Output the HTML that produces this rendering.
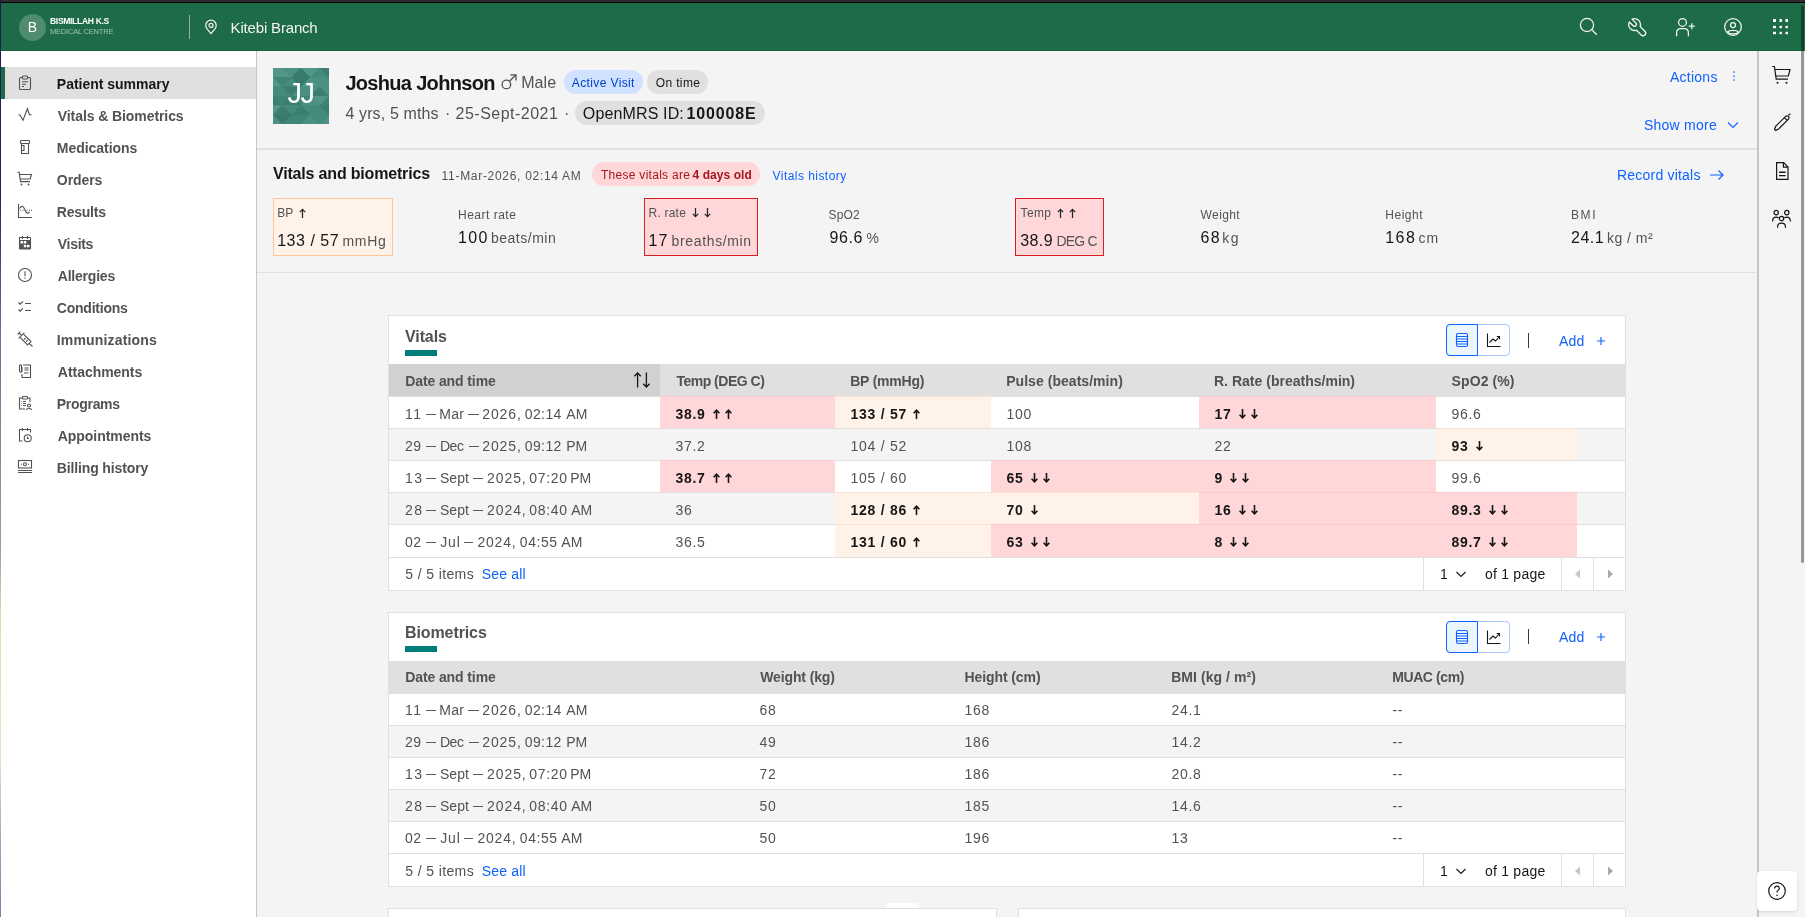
<!DOCTYPE html>
<html><head><meta charset="utf-8">
<style>
*{box-sizing:border-box;margin:0;padding:0}
html,body{width:1805px;height:917px;overflow:hidden;background:#f4f4f4;font-family:"Liberation Sans",sans-serif;color:#161616}
body{will-change:transform}
.a{position:absolute;white-space:nowrap}
#topbar{position:absolute;left:0;top:0;width:1805px;height:3px;background:#2b2b31;border-bottom:1px solid #000}
#leftline{position:absolute;left:0;top:0;width:1px;height:917px;background:linear-gradient(to bottom,#1c1b4f 0px,#23246a 200px,#6f6d98 330px,#958a9a 480px,#a99a90 550px,#e6dcb9 620px,#e9e0c4 760px,#a9acc3 830px,#7a7ea6 917px)}
#hdr{position:absolute;left:1px;top:3px;width:1804px;height:48px;background:#1e6b47;border-bottom:1px solid #1a5f3f}
#side{position:absolute;left:1px;top:51px;width:256px;height:866px;background:#fff;border-right:1px solid #c6c6c6;z-index:2}
.nav{position:absolute;left:0;width:255px;height:32px;font-size:14px;font-weight:bold;color:#525252;line-height:32px}
.nav .t{position:absolute;left:56px;top:1px}
.nav svg{position:absolute;left:16px;top:8px}
.nav.act{background:#e0e0e0;color:#161616}
.nav.act:before{content:"";position:absolute;left:0;top:0;width:4px;height:32px;background:#1e6b47}
#rside{position:absolute;left:1757px;top:51px;width:43px;height:866px;background:#f4f4f4;border-left:2px solid #c6c6c6}
#scroll{display:none}
#thumb{position:absolute;left:1801px;top:5px;width:3px;height:558px;background:rgba(0,0,0,0.38);border-radius:2px}
.lbl{font-size:12px;color:#525252}
.card{position:absolute;background:#fff;border:1px solid #e0e0e0}
.tag{position:absolute;height:24px;border-radius:12px;font-size:12px;line-height:26px;padding:0 8px;letter-spacing:0.3px}
.link{color:#0f62fe}
.lbl2{font-size:12px;color:#525252;letter-spacing:0.35px;line-height:16px}
.val{font-size:16px;color:#161616;line-height:20px;letter-spacing:0.4px}
.unit{font-size:14px;color:#525252;letter-spacing:0.4px}
.ar{display:inline-block;vertical-align:baseline;margin-right:5px;color:#161616}
.arw{margin-left:7.5px}
.ctitle{font-size:16px;font-weight:bold;color:#525252;letter-spacing:-0.1px}
.th{font-size:14px;font-weight:bold;color:#525252;line-height:34px;letter-spacing:-0.35px}
.td{font-size:14px;color:#525252;line-height:36px;letter-spacing:0.75px}
.td.b{font-weight:bold;color:#161616;letter-spacing:0.75px}
.ftxt{font-size:14px;color:#525252;line-height:16px;letter-spacing:0.15px}
.ftxt.link{color:#0f62fe}
</style></head><body>
<div id="topbar"></div>
<div id="leftline"></div>
<div id="hdr">
  <div class="a" style="left:18px;top:11px;width:27px;height:27px;border-radius:50%;background:#4f8b6e;color:#fff;font-size:14px;line-height:27px;text-align:center">B</div>
  <div class="a" style="left:49px;top:13px;font-size:8.5px;font-weight:bold;color:#fff;letter-spacing:-0.3px">BISMILLAH K.S</div>
  <div class="a" style="left:49px;top:24px;font-size:7.5px;color:#9cc3ad;letter-spacing:-0.2px">MEDICAL CENTRE</div>
  <div class="a" style="left:188px;top:12px;width:1px;height:24px;background:#8db49f"></div>
  <svg class="a" style="left:201.5px;top:16px" width="16" height="16" viewBox="0 0 16 16" fill="none" stroke="#f4f4f4" stroke-width="1.2"><path d="M8 14.6L4.1 9.8C3.3 8.8 2.8 7.6 2.8 6.4C2.8 3.5 5.1 1.2 8 1.2C10.9 1.2 13.2 3.5 13.2 6.4C13.2 7.6 12.7 8.8 11.9 9.8Z"/><circle cx="8" cy="6.4" r="2"/></svg>
  <div class="a" style="left:229.6px;top:16px;font-size:15px;color:#f4f4f4;letter-spacing:-0.175px">Kitebi Branch</div>
  <svg class="a" style="left:1559px;top:0px" width="240" height="48" viewBox="1560 3 240 48" fill="none" stroke="#f4f4f4" stroke-width="1.25">
    <circle cx="1587" cy="25" r="6.6"/><path d="M1591.8 29.8L1596.8 34.8"/>
    <g transform="translate(1626.7 16.7) scale(0.655)" fill="#f4f4f4" stroke="none"><path d="M12.1 2a9.8 9.8 0 0 0-5.4 1.6l6.4 6.4a2.1 2.1 0 0 1 .2 3a2.1 2.1 0 0 1-3-.2L3.7 6.4A9.84 9.84 0 0 0 2 12.1a10.14 10.14 0 0 0 10.1 10.1a10.9 10.9 0 0 0 2.6-.3l6.7 6.7a5 5 0 0 0 7.1-7.1l-6.7-6.7a10.9 10.9 0 0 0 .3-2.6A10 10 0 0 0 12.1 2Zm8 10.1a7.61 7.61 0 0 1-.3 2.1l-.3 1.1.8.8 6.7 6.7a2.88 2.88 0 0 1 .9 2.1A2.72 2.72 0 0 1 27 27a2.9 2.9 0 0 1-4.2 0l-6.7-6.7-.8-.8-1.1.3a7.61 7.61 0 0 1-2.1.3a8.27 8.27 0 0 1-5.7-2.3A7.630 7.63 0 0 1 4 12.1a8.330 8.33 0 0 1 .3-2.2l4.4 4.4a4.14 4.14 0 0 0 5.9.2a4.14 4.14 0 0 0-.2-5.9L10 4.2a6.45 6.45 0 0 1 2-.3a8.27 8.27 0 0 1 5.7 2.3a8.57 8.57 0 0 1 2.4 5.9Z"/></g>
    <circle cx="1682.5" cy="22.4" r="3.9"/><path d="M1676.6 36.2V33C1676.6 30.2 1678.4 28.6 1681 28.6H1684C1686.6 28.6 1688.4 30.2 1688.4 33V36.2"/><path d="M1691.8 23.2V29.2M1688.8 26.2H1694.8"/>
    <circle cx="1733" cy="27" r="8.3"/><circle cx="1733" cy="25" r="2.5"/><path d="M1727.6 32C1729.4 29.8 1736.6 29.8 1738.4 32C1736.6 34.6 1729.4 34.6 1727.6 32Z"/>
    <g fill="#fff" stroke="none"><rect x="1773" y="19" width="3" height="3"/><rect x="1779.5" y="19" width="2.4" height="3"/><rect x="1785.5" y="19" width="2.4" height="3"/><rect x="1773" y="25.8" width="3" height="2.4"/><rect x="1779.5" y="25.8" width="2.4" height="2.4"/><rect x="1785.5" y="25.8" width="2.4" height="2.4"/><rect x="1773" y="31.8" width="3" height="2.4"/><rect x="1779.5" y="31.8" width="2.4" height="2.4"/><rect x="1785.5" y="31.8" width="2.4" height="2.4"/></g>
  </svg>
</div>
<div id="side">
<div class="nav act" style="top:16px"><svg width="16" height="16" viewBox="0 0 16 16" fill="none" stroke="#525252" stroke-width="1.1"><rect x="2.5" y="2.5" width="11" height="12" rx="1"/><rect x="5.5" y="1" width="5" height="3" rx="0.8" fill="#e0e0e0"/><path d="M5 6.8h6M5 9.3h4M5 11.5h2"/></svg><span class="t" style="left:55.8px;letter-spacing:-0.008px">Patient summary</span></div>
<div class="nav" style="top:48px"><svg width="16" height="16" viewBox="0 0 16 16" fill="none" stroke="#525252" stroke-width="1.1"><path d="M1.5 7.7L3 8L6 13.3L10.4 1.7L12.5 7.8H14.5"/></svg><span class="t" style="left:56.8px;letter-spacing:-0.083px">Vitals &amp; Biometrics</span></div>
<div class="nav" style="top:80px"><svg width="16" height="16" viewBox="0 0 16 16" fill="none" stroke="#525252" stroke-width="1.1"><rect x="3.5" y="1.5" width="9" height="3" rx="0.5"/><rect x="4.5" y="4.5" width="7" height="10"/><path d="M5 6.5h2v5H5"/></svg><span class="t" style="left:55.8px;letter-spacing:-0.04px">Medications</span></div>
<div class="nav" style="top:112px"><svg width="16" height="16" viewBox="0 0 16 16" fill="none" stroke="#525252" stroke-width="1.1"><path d="M0.5 1.2H2.2L3.5 10.6H13"/><path d="M2.6 3.5H14.5L13.2 8H3.2"/><circle cx="4.5" cy="13.5" r="0.9" fill="#525252" stroke="none"/><circle cx="11.5" cy="13.5" r="0.9" fill="#525252" stroke="none"/></svg><span class="t" style="left:55.8px;letter-spacing:-0.06px">Orders</span></div>
<div class="nav" style="top:144px"><svg width="16" height="16" viewBox="0 0 16 16" fill="none" stroke="#525252" stroke-width="1.1"><path d="M1.5 1V14.5H15"/><path d="M2.5 5.5C5 2 6.5 3 8 7C9.5 11 11 10.5 12.5 9" /><path d="M3 7.2h1M5.5 7.2h1M9.5 7.2h1M12 7.2h1M14 7.2h1" stroke-dasharray="1 1"/></svg><span class="t" style="left:55.8px;letter-spacing:-0.233px">Results</span></div>
<div class="nav" style="top:176px"><svg width="16" height="16" viewBox="0 0 16 16" fill="none" stroke="#525252" stroke-width="1.1"><rect x="2.5" y="2.5" width="11" height="11.5" rx="0.5"/><path d="M5.5 1v3M10.5 1v3"/><rect x="2.5" y="5" width="11" height="9" fill="#525252" stroke="none"/><rect x="3.5" y="6" width="2.5" height="2.5" fill="#fff" stroke="none"/><rect x="6.8" y="6" width="2.5" height="2.5" fill="#fff" stroke="none"/><rect x="6.8" y="9.8" width="2.5" height="2.5" fill="#fff" stroke="none"/><rect x="10" y="9.8" width="2.5" height="2.5" fill="#fff" stroke="none"/></svg><span class="t" style="left:56.8px;letter-spacing:-0.3px">Visits</span></div>
<div class="nav" style="top:208px"><svg width="16" height="16" viewBox="0 0 16 16" fill="none" stroke="#525252" stroke-width="1.1"><circle cx="8" cy="8" r="6.5"/><path d="M8 4.2v5"/><circle cx="8" cy="11.3" r="0.7" fill="#525252" stroke="none"/></svg><span class="t" style="left:56.8px;letter-spacing:-0.214px">Allergies</span></div>
<div class="nav" style="top:240px"><svg width="16" height="16" viewBox="0 0 16 16" fill="none" stroke="#525252" stroke-width="1.1"><path d="M1.5 3.5l1.7 1.7L6 2.3M1.5 10.5l1.7 1.7L6 9.3M8 4.5h6M8 11.5h6"/></svg><span class="t" style="left:55.8px;letter-spacing:-0.222px">Conditions</span></div>
<div class="nav" style="top:272px"><svg width="16" height="16" viewBox="0 0 16 16" fill="none" stroke="#525252" stroke-width="1.1"><path d="M0.6 3.4L3.4 0.6M2 2L4.6 4.6M1.6 7.4L7.4 1.6M6.7 3.3L14 10.6L10.6 14L3.3 6.7M12.3 12.3L15.5 15.5M7 8.6l1.6-1.6M9 10.6l1.6-1.6"/></svg><span class="t" style="left:55.8px;letter-spacing:0.167px">Immunizations</span></div>
<div class="nav" style="top:304px"><svg width="16" height="16" viewBox="0 0 16 16" fill="none" stroke="#525252" stroke-width="1.1"><path d="M6 2H13.5V14.5H5V11M7.5 5h4M7.5 7h4M7 10h4.5"/><path d="M4.5 8.5V3C4.5 1.5 2.5 1.5 2.5 3V8C2.5 9.5 5 9.5 5 8V4"/></svg><span class="t" style="left:56.8px;letter-spacing:-0.03px">Attachments</span></div>
<div class="nav" style="top:336px"><svg width="16" height="16" viewBox="0 0 16 16" fill="none" stroke="#525252" stroke-width="1.1"><path d="M5 3H2.5V14H8M11 3H13V7"/><rect x="5.5" y="1.5" width="5" height="2.5" rx="0.8"/><path d="M4 6.5h0.5M6 6.5h3M4 8.5h0.5M6 8.5h3M4 10.5h0.5M6 10.5h3"/><circle cx="12" cy="10.5" r="1.5"/><path d="M9.5 15c0-2 5-2 5 0"/></svg><span class="t" style="left:55.8px;letter-spacing:-0.3px">Programs</span></div>
<div class="nav" style="top:368px"><svg width="16" height="16" viewBox="0 0 16 16" fill="none" stroke="#525252" stroke-width="1.1"><path d="M5.5 14H2.5V2.5H13.5V5.5M5.5 1v3M10.5 1v3"/><circle cx="10.7" cy="11.2" r="3.5"/><path d="M10.5 9.5v2h1.5"/></svg><span class="t" style="left:56.8px;letter-spacing:-0.054px">Appointments</span></div>
<div class="nav" style="top:400px"><svg width="16" height="16" viewBox="0 0 16 16" fill="none" stroke="#525252" stroke-width="1.1"><rect x="1.5" y="1.5" width="13" height="7.5"/><circle cx="8" cy="5.3" r="1.5"/><path d="M4 5.3h1M11 5.3h1M1 11.5h14M1 13.5h14"/></svg><span class="t" style="left:55.8px;letter-spacing:-0.136px">Billing history</span></div>
</div>

<!-- patient banner -->
<div class="a" style="left:257px;top:148px;width:1500px;height:2px;background:#e0e0e0"></div>
<svg class="a" style="left:273px;top:68px" width="56" height="56" viewBox="0 0 56 56"><rect width="56" height="56" fill="#3f8577"/><path d="M-18.7 9.3L-9.3 0.0L0.0 9.3Z" fill="#4b9083"/><path d="M-9.3 0.0L9.3 0.0L0.0 9.3Z" fill="#52968a"/><path d="M0.0 9.3L9.3 0.0L18.7 9.3Z" fill="#52968a"/><path d="M9.3 0.0L28.0 0.0L18.7 9.3Z" fill="#4b9083"/><path d="M18.7 9.3L28.0 0.0L37.3 9.3Z" fill="#387a6c"/><path d="M28.0 0.0L46.7 0.0L37.3 9.3Z" fill="#52968a"/><path d="M37.3 9.3L46.7 0.0L56.0 9.3Z" fill="#458b7d"/><path d="M46.7 0.0L65.3 0.0L56.0 9.3Z" fill="#3b7d70"/><path d="M56.0 9.3L65.3 0.0L74.7 9.3Z" fill="#52968a"/><path d="M65.3 0.0L84.0 0.0L74.7 9.3Z" fill="#3f8577"/><path d="M-9.3 18.7L0.0 9.3L9.3 18.7Z" fill="#52968a"/><path d="M0.0 9.3L18.7 9.3L9.3 18.7Z" fill="#3f8577"/><path d="M9.3 18.7L18.7 9.3L28.0 18.7Z" fill="#458b7d"/><path d="M18.7 9.3L37.3 9.3L28.0 18.7Z" fill="#387a6c"/><path d="M28.0 18.7L37.3 9.3L46.7 18.7Z" fill="#52968a"/><path d="M37.3 9.3L56.0 9.3L46.7 18.7Z" fill="#4b9083"/><path d="M46.7 18.7L56.0 9.3L65.3 18.7Z" fill="#4b9083"/><path d="M56.0 9.3L74.7 9.3L65.3 18.7Z" fill="#3b7d70"/><path d="M65.3 18.7L74.7 9.3L84.0 18.7Z" fill="#458b7d"/><path d="M74.7 9.3L93.3 9.3L84.0 18.7Z" fill="#52968a"/><path d="M-18.7 28.0L-9.3 18.7L0.0 28.0Z" fill="#52968a"/><path d="M-9.3 18.7L9.3 18.7L0.0 28.0Z" fill="#458b7d"/><path d="M0.0 28.0L9.3 18.7L18.7 28.0Z" fill="#458b7d"/><path d="M9.3 18.7L28.0 18.7L18.7 28.0Z" fill="#3b7d70"/><path d="M18.7 28.0L28.0 18.7L37.3 28.0Z" fill="#4b9083"/><path d="M28.0 18.7L46.7 18.7L37.3 28.0Z" fill="#4b9083"/><path d="M37.3 28.0L46.7 18.7L56.0 28.0Z" fill="#3b7d70"/><path d="M46.7 18.7L65.3 18.7L56.0 28.0Z" fill="#4b9083"/><path d="M56.0 28.0L65.3 18.7L74.7 28.0Z" fill="#52968a"/><path d="M65.3 18.7L84.0 18.7L74.7 28.0Z" fill="#458b7d"/><path d="M-9.3 37.3L0.0 28.0L9.3 37.3Z" fill="#3b7d70"/><path d="M0.0 28.0L18.7 28.0L9.3 37.3Z" fill="#3f8577"/><path d="M9.3 37.3L18.7 28.0L28.0 37.3Z" fill="#3b7d70"/><path d="M18.7 28.0L37.3 28.0L28.0 37.3Z" fill="#3f8577"/><path d="M28.0 37.3L37.3 28.0L46.7 37.3Z" fill="#4b9083"/><path d="M37.3 28.0L56.0 28.0L46.7 37.3Z" fill="#52968a"/><path d="M46.7 37.3L56.0 28.0L65.3 37.3Z" fill="#3f8577"/><path d="M56.0 28.0L74.7 28.0L65.3 37.3Z" fill="#387a6c"/><path d="M65.3 37.3L74.7 28.0L84.0 37.3Z" fill="#3f8577"/><path d="M74.7 28.0L93.3 28.0L84.0 37.3Z" fill="#387a6c"/><path d="M-18.7 46.7L-9.3 37.3L0.0 46.7Z" fill="#458b7d"/><path d="M-9.3 37.3L9.3 37.3L0.0 46.7Z" fill="#52968a"/><path d="M0.0 46.7L9.3 37.3L18.7 46.7Z" fill="#3b7d70"/><path d="M9.3 37.3L28.0 37.3L18.7 46.7Z" fill="#458b7d"/><path d="M18.7 46.7L28.0 37.3L37.3 46.7Z" fill="#3b7d70"/><path d="M28.0 37.3L46.7 37.3L37.3 46.7Z" fill="#458b7d"/><path d="M37.3 46.7L46.7 37.3L56.0 46.7Z" fill="#458b7d"/><path d="M46.7 37.3L65.3 37.3L56.0 46.7Z" fill="#3b7d70"/><path d="M56.0 46.7L65.3 37.3L74.7 46.7Z" fill="#52968a"/><path d="M65.3 37.3L84.0 37.3L74.7 46.7Z" fill="#458b7d"/><path d="M-9.3 56.0L0.0 46.7L9.3 56.0Z" fill="#4b9083"/><path d="M0.0 46.7L18.7 46.7L9.3 56.0Z" fill="#387a6c"/><path d="M9.3 56.0L18.7 46.7L28.0 56.0Z" fill="#3f8577"/><path d="M18.7 46.7L37.3 46.7L28.0 56.0Z" fill="#3f8577"/><path d="M28.0 56.0L37.3 46.7L46.7 56.0Z" fill="#4b9083"/><path d="M37.3 46.7L56.0 46.7L46.7 56.0Z" fill="#458b7d"/><path d="M46.7 56.0L56.0 46.7L65.3 56.0Z" fill="#4b9083"/><path d="M56.0 46.7L74.7 46.7L65.3 56.0Z" fill="#387a6c"/><path d="M65.3 56.0L74.7 46.7L84.0 56.0Z" fill="#3b7d70"/><path d="M74.7 46.7L93.3 46.7L84.0 56.0Z" fill="#458b7d"/></svg>
<div class="a" style="left:273px;top:76.5px;width:56px;text-align:center;font-size:29px;color:#fff;line-height:32px;letter-spacing:-1.5px;text-indent:-1px">JJ</div>
<div class="a" style="left:345.4px;top:72px;font-size:20px;font-weight:bold;color:#161616;letter-spacing:-0.684px">Joshua Johnson</div>
<svg class="a" style="left:499px;top:72px" width="18" height="18" viewBox="0 0 18 18" fill="none" stroke="#525252" stroke-width="1.3"><circle cx="7.4" cy="12.4" r="4.3"/><path d="M10.5 9.3L17 2.8M11.4 2.8H17V8.4"/></svg>
<div class="a" style="left:521.2px;top:74px;font-size:16px;color:#525252;letter-spacing:0.066px">Male</div>
<div class="a" style="left:564px;top:70px;width:79px;height:24px;border-radius:12px;background:#d0e2ff"></div>
<div class="a" style="left:571.8px;top:70px;font-size:12px;line-height:26px;color:#0043ce;letter-spacing:0.381px">Active Visit</div>
<div class="a" style="left:647px;top:70px;width:61px;height:24px;border-radius:12px;background:#e0e0e0"></div>
<div class="a" style="left:655.8px;top:70px;font-size:12px;line-height:26px;color:#161616;letter-spacing:0.35px">On time</div>
<div class="a" style="left:345.4px;top:105px;font-size:16px;color:#525252;letter-spacing:0.134px">4 yrs, 5 mths</div>
<div class="a" style="left:445px;top:105px;font-size:16px;color:#525252">&middot;</div>
<div class="a" style="left:455.6px;top:105px;font-size:16px;color:#525252;letter-spacing:0.482px">25-Sept-2021</div>
<div class="a" style="left:564px;top:105px;font-size:16px;color:#525252">&middot;</div>
<div class="a" style="left:575px;top:101px;width:190px;height:24px;border-radius:12px;background:#e0e0e0"></div>
<div class="a" style="left:582.8px;top:105px;font-size:16px;color:#161616;letter-spacing:0.14px">OpenMRS ID:</div>
<div class="a" style="left:686.6px;top:105px;font-size:16px;font-weight:bold;color:#161616;letter-spacing:0.816px">100008E</div>
<div class="a link" style="left:1670.0px;top:69px;font-size:14px;letter-spacing:0.25px">Actions</div>
<svg class="a" style="left:1726px;top:68px" width="16" height="16" viewBox="0 0 16 16" fill="#0f62fe"><circle cx="8" cy="4" r="0.85"/><circle cx="8" cy="8" r="0.85"/><circle cx="8" cy="12" r="0.85"/></svg>
<div class="a link" style="left:1644.0px;top:117px;font-size:14px;letter-spacing:0.236px">Show more</div>
<svg class="a" style="left:1725px;top:117px" width="16" height="16" viewBox="0 0 16 16" fill="none" stroke="#0f62fe" stroke-width="1.1"><path d="M3 5.5l5 5 5-5"/></svg>

<!-- vitals header -->
<div class="a" style="left:257px;top:272px;width:1500px;height:1px;background:#e0e0e0"></div>
<div class="a" style="left:273.0px;top:165px;font-size:16px;font-weight:bold;color:#161616;letter-spacing:-0.18px">Vitals and biometrics</div>
<div class="a" style="left:441.6px;top:169px;font-size:12px;color:#525252;letter-spacing:0.7px">11-Mar-2026, 02:14 AM</div>
<div class="a" style="left:592px;top:162px;width:168px;height:24px;border-radius:12px;background:#ffd7d9"></div>
<div class="a" style="left:601.0px;top:162px;font-size:12px;line-height:26px;color:#a2191f;letter-spacing:0.28px">These vitals are</div>
<div class="a" style="left:692.6px;top:162px;font-size:12px;line-height:26px;font-weight:bold;color:#a2191f;letter-spacing:0.056px">4 days old</div>
<div class="a link" style="left:772.6px;top:169px;font-size:12px;letter-spacing:0.446px">Vitals history</div>
<div class="a link" style="left:1617.0px;top:167px;font-size:14px;letter-spacing:0.208px">Record vitals</div>
<svg class="a" style="left:1709px;top:167px" width="16" height="16" viewBox="0 0 16 16" fill="none" stroke="#0f62fe" stroke-width="1.2"><path d="M1 8h13M9.5 3.5L14 8l-4.5 4.5"/></svg>
<div class="a" style="left:273px;top:198px;width:120px;height:58px;background:#fff2e8;border:1px solid #ffc49b"></div>
<div class="a" style="left:644px;top:198px;width:114px;height:58px;background:#ffd7d9;border:1px solid #da1e28"></div>
<div class="a" style="left:1015px;top:198px;width:89px;height:58px;background:#ffd7d9;border:1px solid #da1e28"></div>
<div class="a lbl2" style="left:277.2px;top:205px;letter-spacing:0.0px">BP</div>
<div class="a val" style="left:277.2px;top:231px;letter-spacing:0.514px">133 / 57</div>
<div class="a val unit" style="left:342.4px;top:231px;letter-spacing:0.733px">mmHg</div>
<div class="a lbl2" style="left:458.0px;top:207px;letter-spacing:0.5px">Heart rate</div>
<div class="a val" style="left:458.0px;top:228px;letter-spacing:1.35px">100</div>
<div class="a val unit" style="left:491.0px;top:228px;letter-spacing:0.5px">beats/min</div>
<div class="a lbl2" style="left:648.6px;top:205px;letter-spacing:0.2px">R. rate</div>
<div class="a val" style="left:648.6px;top:231px;letter-spacing:1.1px">17</div>
<div class="a val unit" style="left:671.6px;top:231px;letter-spacing:0.64px">breaths/min</div>
<div class="a lbl2" style="left:828.6px;top:207px;letter-spacing:0.133px">SpO2</div>
<div class="a val" style="left:829.6px;top:228px;letter-spacing:0.533px">96.6</div>
<div class="a val unit" style="left:866.6px;top:228px;letter-spacing:0.0px">%</div>
<div class="a lbl2" style="left:1020.6px;top:205px;letter-spacing:0.334px">Temp</div>
<div class="a val" style="left:1020.2px;top:231px;letter-spacing:0.4px">38.9</div>
<div class="a val unit" style="left:1056.6px;top:231px;letter-spacing:-0.85px">DEG C</div>
<div class="a lbl2" style="left:1200.6px;top:207px;letter-spacing:0.38px">Weight</div>
<div class="a val" style="left:1200.4px;top:228px;letter-spacing:1.4px">68</div>
<div class="a val unit" style="left:1222.2px;top:228px;letter-spacing:1.5px">kg</div>
<div class="a lbl2" style="left:1385.2px;top:207px;letter-spacing:0.56px">Height</div>
<div class="a val" style="left:1385.2px;top:228px;letter-spacing:1.45px">168</div>
<div class="a val unit" style="left:1418.4px;top:228px;letter-spacing:1.1px">cm</div>
<div class="a lbl2" style="left:1571.0px;top:207px;letter-spacing:1.6px">BMI</div>
<div class="a val" style="left:1571.0px;top:228px;letter-spacing:0.5px">24.1</div>
<div class="a val unit" style="left:1607.0px;top:228px;letter-spacing:0.466px">kg / m²</div>
<svg class="a" style="left:299.3px;top:208px" width="7" height="10" viewBox="0 0 7 10"><path d="M3.5 10V1.4M0.8 4.1L3.5 1.4L6.2 4.1" fill="none" stroke="#262626" stroke-width="1.25"/></svg>
<svg class="a" style="left:692.0px;top:208px" width="7" height="10" viewBox="0 0 7 10"><path d="M3.5 0V8.6M0.8 5.9L3.5 8.6L6.2 5.9" fill="none" stroke="#262626" stroke-width="1.25"/></svg>
<svg class="a" style="left:704.4px;top:208px" width="7" height="10" viewBox="0 0 7 10"><path d="M3.5 0V8.6M0.8 5.9L3.5 8.6L6.2 5.9" fill="none" stroke="#262626" stroke-width="1.25"/></svg>
<svg class="a" style="left:1057.2px;top:208px" width="7" height="10" viewBox="0 0 7 10"><path d="M3.5 10V1.4M0.8 4.1L3.5 1.4L6.2 4.1" fill="none" stroke="#262626" stroke-width="1.25"/></svg>
<svg class="a" style="left:1069.4px;top:208px" width="7" height="10" viewBox="0 0 7 10"><path d="M3.5 10V1.4M0.8 4.1L3.5 1.4L6.2 4.1" fill="none" stroke="#262626" stroke-width="1.25"/></svg>
<!-- TABLES -->
<div class="card" style="left:388px;top:315px;width:1238px;height:276px"></div>
<div class="a ctitle" style="left:405px;top:328px">Vitals</div>
<div class="a" style="left:405px;top:350px;width:32px;height:6px;background:#007d79"></div>
<div class="a" style="left:1446px;top:324px;width:64px;height:32px;border:1px solid #a6c8ff;border-radius:4px;background:#fff"></div>
<div class="a" style="left:1446px;top:324px;width:32px;height:32px;border:1px solid #0f62fe;border-radius:4px 0 0 4px;background:#edf5ff"></div>
<svg class="a" style="left:1454px;top:332px" width="16" height="16" viewBox="0 0 16 16" fill="none" stroke="#0f62fe" stroke-width="1.1"><rect x="2.5" y="1.5" width="11" height="13" rx="1.5"/><path d="M2.5 4.5h11M2.5 7h11M2.5 9.5h11M2.5 12h11"/></svg>
<svg class="a" style="left:1486px;top:332px" width="16" height="16" viewBox="0 0 16 16" fill="none" stroke="#161616" stroke-width="1.1"><path d="M1.5 1.5V14.5H14.5"/><path d="M3.5 10.5L7 7L9.5 9L13.5 4.5M10.8 4.5H13.5V7.2"/></svg>
<div class="a" style="left:1528px;top:333px;width:1.4px;height:15px;background:#393939"></div>
<div class="a link" style="left:1559.0px;top:333px;font-size:14px;letter-spacing:0.25px">Add</div>
<svg class="a" style="left:1593px;top:333px" width="16" height="16" viewBox="0 0 16 16" fill="none" stroke="#0f62fe" stroke-width="1.15"><path d="M8 4v8M4 8h8"/></svg>
<div class="a" style="left:389px;top:364px;width:1236px;height:32px;background:#e0e0e0"></div>
<div class="a" style="left:389px;top:364px;width:271px;height:32px;background:#d1d1d1"></div>
<div class="a th" style="left:405.2px;top:364px;letter-spacing:-0.1px">Date and time</div>
<div class="a th" style="left:676.4px;top:364px;letter-spacing:-0.491px">Temp (DEG C)</div>
<div class="a th" style="left:850.2px;top:364px;letter-spacing:-0.211px">BP (mmHg)</div>
<div class="a th" style="left:1006.2px;top:364px;letter-spacing:0.044px">Pulse (beats/min)</div>
<div class="a th" style="left:1214.0px;top:364px;letter-spacing:0.01px">R. Rate (breaths/min)</div>
<div class="a th" style="left:1451.6px;top:364px;letter-spacing:0.086px">SpO2 (%)</div>
<svg class="a" style="left:632px;top:371px" width="20" height="18" viewBox="0 0 20 18" fill="none" stroke="#161616" stroke-width="1.3"><path d="M5.6 16.5V2M2.4 5.2L5.6 2L8.8 5.2M14.4 1.5V16M11.2 12.8L14.4 16L17.6 12.8"/></svg>
<div class="a" style="left:389px;top:396px;width:1236px;height:32px;background:#fff;border-top:1px solid #e0e0e0"></div>
<div class="a" style="left:660px;top:396px;width:175px;height:32px;background:#ffd7d9;border-top:1px solid #ffc9cd"></div>
<div class="a" style="left:835px;top:396px;width:156px;height:32px;background:#fff2e8;border-top:1px solid #ffe2cc"></div>
<div class="a" style="left:1199px;top:396px;width:237px;height:32px;background:#ffd7d9;border-top:1px solid #ffc9cd"></div>
<div class="a td" style="left:405.0px;top:396px;letter-spacing:1.5px">11</div>
<div class="a td" style="left:439.2px;top:396px;letter-spacing:0.3px">Mar</div>
<div class="a td" style="left:482.2px;top:396px;letter-spacing:0.925px">2026,</div>
<div class="a td" style="left:524.8px;top:396px;letter-spacing:0.375px">02:14</div>
<div class="a td" style="left:566.2px;top:396px;letter-spacing:0.2px">AM</div>
<div class="a" style="left:426px;top:414px;width:10.0px;height:1px;background:#5a5a5a"></div>
<div class="a" style="left:468px;top:414px;width:10.7px;height:1px;background:#5a5a5a"></div>
<div class="a td b" style="left:675.4px;top:396px">38.9<span class="arw"><svg class="ar" width="7" height="10" viewBox="0 0 7 10"><path d="M3.5 10V1.2M0.6 4.2L3.5 1.2L6.4 4.2" fill="none" stroke="currentColor" stroke-width="1.6"/></svg><svg class="ar" width="7" height="10" viewBox="0 0 7 10"><path d="M3.5 10V1.2M0.6 4.2L3.5 1.2L6.4 4.2" fill="none" stroke="currentColor" stroke-width="1.6"/></svg></span></div>
<div class="a td b" style="left:850.4px;top:396px">133 / 57<span class="arw" style="margin-left:5.5px"><svg class="ar" width="7" height="10" viewBox="0 0 7 10"><path d="M3.5 10V1.2M0.6 4.2L3.5 1.2L6.4 4.2" fill="none" stroke="currentColor" stroke-width="1.6"/></svg></span></div>
<div class="a td" style="left:1006.4px;top:396px">100</div>
<div class="a td b" style="left:1214.4px;top:396px">17<span class="arw"><svg class="ar" width="7" height="10" viewBox="0 0 7 10"><path d="M3.5 0V8.8M0.6 5.8L3.5 8.8L6.4 5.8" fill="none" stroke="currentColor" stroke-width="1.6"/></svg><svg class="ar" width="7" height="10" viewBox="0 0 7 10"><path d="M3.5 0V8.8M0.6 5.8L3.5 8.8L6.4 5.8" fill="none" stroke="currentColor" stroke-width="1.6"/></svg></span></div>
<div class="a td" style="left:1451.4px;top:396px">96.6</div>
<div class="a" style="left:389px;top:428px;width:1236px;height:32px;background:#f4f4f4;border-top:1px solid #e0e0e0"></div>
<div class="a" style="left:1436px;top:428px;width:141px;height:32px;background:#fff2e8;border-top:1px solid #ffe2cc"></div>
<div class="a td" style="left:405.0px;top:428px;letter-spacing:0.5px">29</div>
<div class="a td" style="left:440.0px;top:428px;letter-spacing:-0.5px">Dec</div>
<div class="a td" style="left:482.2px;top:428px;letter-spacing:0.925px">2025,</div>
<div class="a td" style="left:524.8px;top:428px;letter-spacing:0.375px">09:12</div>
<div class="a td" style="left:566.2px;top:428px;letter-spacing:-0.1px">PM</div>
<div class="a" style="left:426px;top:446px;width:10.0px;height:1px;background:#5a5a5a"></div>
<div class="a" style="left:468.7px;top:446px;width:10.0px;height:1px;background:#5a5a5a"></div>
<div class="a td" style="left:675.4px;top:428px">37.2</div>
<div class="a td" style="left:850.4px;top:428px">104 / 52</div>
<div class="a td" style="left:1006.4px;top:428px">108</div>
<div class="a td" style="left:1214.4px;top:428px">22</div>
<div class="a td b" style="left:1451.4px;top:428px">93<span class="arw"><svg class="ar" width="7" height="10" viewBox="0 0 7 10"><path d="M3.5 0V8.8M0.6 5.8L3.5 8.8L6.4 5.8" fill="none" stroke="currentColor" stroke-width="1.6"/></svg></span></div>
<div class="a" style="left:389px;top:460px;width:1236px;height:32px;background:#fff;border-top:1px solid #e0e0e0"></div>
<div class="a" style="left:660px;top:460px;width:175px;height:32px;background:#ffd7d9;border-top:1px solid #ffc9cd"></div>
<div class="a" style="left:991px;top:460px;width:208px;height:32px;background:#ffd7d9;border-top:1px solid #ffc9cd"></div>
<div class="a" style="left:1199px;top:460px;width:237px;height:32px;background:#ffd7d9;border-top:1px solid #ffc9cd"></div>
<div class="a td" style="left:405.0px;top:460px;letter-spacing:1.4px">13</div>
<div class="a td" style="left:440.0px;top:460px;letter-spacing:0.033px">Sept</div>
<div class="a td" style="left:487.0px;top:460px;letter-spacing:0.925px">2025,</div>
<div class="a td" style="left:529.2px;top:460px;letter-spacing:0.7px">07:20</div>
<div class="a td" style="left:570.2px;top:460px;letter-spacing:-0.1px">PM</div>
<div class="a" style="left:425.8px;top:478px;width:10.2px;height:1px;background:#5a5a5a"></div>
<div class="a" style="left:473.1px;top:478px;width:10.4px;height:1px;background:#5a5a5a"></div>
<div class="a td b" style="left:675.4px;top:460px">38.7<span class="arw"><svg class="ar" width="7" height="10" viewBox="0 0 7 10"><path d="M3.5 10V1.2M0.6 4.2L3.5 1.2L6.4 4.2" fill="none" stroke="currentColor" stroke-width="1.6"/></svg><svg class="ar" width="7" height="10" viewBox="0 0 7 10"><path d="M3.5 10V1.2M0.6 4.2L3.5 1.2L6.4 4.2" fill="none" stroke="currentColor" stroke-width="1.6"/></svg></span></div>
<div class="a td" style="left:850.4px;top:460px">105 / 60</div>
<div class="a td b" style="left:1006.4px;top:460px">65<span class="arw"><svg class="ar" width="7" height="10" viewBox="0 0 7 10"><path d="M3.5 0V8.8M0.6 5.8L3.5 8.8L6.4 5.8" fill="none" stroke="currentColor" stroke-width="1.6"/></svg><svg class="ar" width="7" height="10" viewBox="0 0 7 10"><path d="M3.5 0V8.8M0.6 5.8L3.5 8.8L6.4 5.8" fill="none" stroke="currentColor" stroke-width="1.6"/></svg></span></div>
<div class="a td b" style="left:1214.4px;top:460px">9<span class="arw"><svg class="ar" width="7" height="10" viewBox="0 0 7 10"><path d="M3.5 0V8.8M0.6 5.8L3.5 8.8L6.4 5.8" fill="none" stroke="currentColor" stroke-width="1.6"/></svg><svg class="ar" width="7" height="10" viewBox="0 0 7 10"><path d="M3.5 0V8.8M0.6 5.8L3.5 8.8L6.4 5.8" fill="none" stroke="currentColor" stroke-width="1.6"/></svg></span></div>
<div class="a td" style="left:1451.4px;top:460px">99.6</div>
<div class="a" style="left:389px;top:492px;width:1236px;height:32px;background:#f4f4f4;border-top:1px solid #e0e0e0"></div>
<div class="a" style="left:835px;top:492px;width:156px;height:32px;background:#fff2e8;border-top:1px solid #ffe2cc"></div>
<div class="a" style="left:991px;top:492px;width:208px;height:32px;background:#fff2e8;border-top:1px solid #ffe2cc"></div>
<div class="a" style="left:1199px;top:492px;width:237px;height:32px;background:#ffd7d9;border-top:1px solid #ffc9cd"></div>
<div class="a" style="left:1436px;top:492px;width:141px;height:32px;background:#ffd7d9;border-top:1px solid #ffc9cd"></div>
<div class="a td" style="left:405.0px;top:492px;letter-spacing:1.4px">28</div>
<div class="a td" style="left:440.0px;top:492px;letter-spacing:0.033px">Sept</div>
<div class="a td" style="left:487.0px;top:492px;letter-spacing:0.925px">2024,</div>
<div class="a td" style="left:529.2px;top:492px;letter-spacing:0.7px">08:40</div>
<div class="a td" style="left:571.2px;top:492px;letter-spacing:-0.1px">AM</div>
<div class="a" style="left:425.8px;top:510px;width:10.2px;height:1px;background:#5a5a5a"></div>
<div class="a" style="left:473.1px;top:510px;width:10.4px;height:1px;background:#5a5a5a"></div>
<div class="a td" style="left:675.4px;top:492px">36</div>
<div class="a td b" style="left:850.4px;top:492px">128 / 86<span class="arw" style="margin-left:5.5px"><svg class="ar" width="7" height="10" viewBox="0 0 7 10"><path d="M3.5 10V1.2M0.6 4.2L3.5 1.2L6.4 4.2" fill="none" stroke="currentColor" stroke-width="1.6"/></svg></span></div>
<div class="a td b" style="left:1006.4px;top:492px">70<span class="arw"><svg class="ar" width="7" height="10" viewBox="0 0 7 10"><path d="M3.5 0V8.8M0.6 5.8L3.5 8.8L6.4 5.8" fill="none" stroke="currentColor" stroke-width="1.6"/></svg></span></div>
<div class="a td b" style="left:1214.4px;top:492px">16<span class="arw"><svg class="ar" width="7" height="10" viewBox="0 0 7 10"><path d="M3.5 0V8.8M0.6 5.8L3.5 8.8L6.4 5.8" fill="none" stroke="currentColor" stroke-width="1.6"/></svg><svg class="ar" width="7" height="10" viewBox="0 0 7 10"><path d="M3.5 0V8.8M0.6 5.8L3.5 8.8L6.4 5.8" fill="none" stroke="currentColor" stroke-width="1.6"/></svg></span></div>
<div class="a td b" style="left:1451.4px;top:492px">89.3<span class="arw"><svg class="ar" width="7" height="10" viewBox="0 0 7 10"><path d="M3.5 0V8.8M0.6 5.8L3.5 8.8L6.4 5.8" fill="none" stroke="currentColor" stroke-width="1.6"/></svg><svg class="ar" width="7" height="10" viewBox="0 0 7 10"><path d="M3.5 0V8.8M0.6 5.8L3.5 8.8L6.4 5.8" fill="none" stroke="currentColor" stroke-width="1.6"/></svg></span></div>
<div class="a" style="left:389px;top:524px;width:1236px;height:33px;background:#fff;border-top:1px solid #e0e0e0"></div>
<div class="a" style="left:835px;top:524px;width:156px;height:33px;background:#fff2e8;border-top:1px solid #ffe2cc"></div>
<div class="a" style="left:991px;top:524px;width:208px;height:33px;background:#ffd7d9;border-top:1px solid #ffc9cd"></div>
<div class="a" style="left:1199px;top:524px;width:237px;height:33px;background:#ffd7d9;border-top:1px solid #ffc9cd"></div>
<div class="a" style="left:1436px;top:524px;width:141px;height:33px;background:#ffd7d9;border-top:1px solid #ffc9cd"></div>
<div class="a td" style="left:405.0px;top:524px;letter-spacing:0.5px">02</div>
<div class="a td" style="left:440.2px;top:524px;letter-spacing:0.85px">Jul</div>
<div class="a td" style="left:477.4px;top:524px;letter-spacing:0.825px">2024,</div>
<div class="a td" style="left:519.8px;top:524px;letter-spacing:0.575px">04:55</div>
<div class="a td" style="left:561.2px;top:524px;letter-spacing:0.2px">AM</div>
<div class="a" style="left:426px;top:542px;width:10.0px;height:1px;background:#5a5a5a"></div>
<div class="a" style="left:463.7px;top:542px;width:9.7px;height:1px;background:#5a5a5a"></div>
<div class="a td" style="left:675.4px;top:524px">36.5</div>
<div class="a td b" style="left:850.4px;top:524px">131 / 60<span class="arw" style="margin-left:5.5px"><svg class="ar" width="7" height="10" viewBox="0 0 7 10"><path d="M3.5 10V1.2M0.6 4.2L3.5 1.2L6.4 4.2" fill="none" stroke="currentColor" stroke-width="1.6"/></svg></span></div>
<div class="a td b" style="left:1006.4px;top:524px">63<span class="arw"><svg class="ar" width="7" height="10" viewBox="0 0 7 10"><path d="M3.5 0V8.8M0.6 5.8L3.5 8.8L6.4 5.8" fill="none" stroke="currentColor" stroke-width="1.6"/></svg><svg class="ar" width="7" height="10" viewBox="0 0 7 10"><path d="M3.5 0V8.8M0.6 5.8L3.5 8.8L6.4 5.8" fill="none" stroke="currentColor" stroke-width="1.6"/></svg></span></div>
<div class="a td b" style="left:1214.4px;top:524px">8<span class="arw"><svg class="ar" width="7" height="10" viewBox="0 0 7 10"><path d="M3.5 0V8.8M0.6 5.8L3.5 8.8L6.4 5.8" fill="none" stroke="currentColor" stroke-width="1.6"/></svg><svg class="ar" width="7" height="10" viewBox="0 0 7 10"><path d="M3.5 0V8.8M0.6 5.8L3.5 8.8L6.4 5.8" fill="none" stroke="currentColor" stroke-width="1.6"/></svg></span></div>
<div class="a td b" style="left:1451.4px;top:524px">89.7<span class="arw"><svg class="ar" width="7" height="10" viewBox="0 0 7 10"><path d="M3.5 0V8.8M0.6 5.8L3.5 8.8L6.4 5.8" fill="none" stroke="currentColor" stroke-width="1.6"/></svg><svg class="ar" width="7" height="10" viewBox="0 0 7 10"><path d="M3.5 0V8.8M0.6 5.8L3.5 8.8L6.4 5.8" fill="none" stroke="currentColor" stroke-width="1.6"/></svg></span></div>
<div class="a" style="left:389px;top:557px;width:1236px;height:1px;background:#e0e0e0"></div>
<div class="a ftxt" style="left:405.2px;top:566px;letter-spacing:0.39px">5 / 5 items</div>
<div class="a ftxt link" style="left:481.8px;top:566px;letter-spacing:0.167px">See all</div>
<div class="a" style="left:1423px;top:557px;width:1px;height:33px;background:#e0e0e0"></div>
<div class="a" style="left:1561px;top:557px;width:1px;height:33px;background:#e0e0e0"></div>
<div class="a" style="left:1593px;top:557px;width:1px;height:33px;background:#e0e0e0"></div>
<div class="a ftxt" style="left:1440.0px;top:566px;color:#161616">1</div>
<svg class="a" style="left:1453px;top:566px" width="16" height="16" viewBox="0 0 16 16" fill="none" stroke="#161616" stroke-width="1.1"><path d="M3.5 6l4.5 4.5 4.5-4.5"/></svg>
<div class="a ftxt" style="left:1485.0px;top:566px;color:#161616;letter-spacing:0.225px">of 1 page</div>
<svg class="a" style="left:1572px;top:566px" width="11" height="16" viewBox="0 0 11 16"><path d="M8 3.5L3 8L8 12.5Z" fill="#c6c6c6"/></svg>
<svg class="a" style="left:1604px;top:566px" width="11" height="16" viewBox="0 0 11 16"><path d="M4 3.5L9 8L4 12.5Z" fill="#a8a8a8"/></svg>
<div class="card" style="left:388px;top:612px;width:1238px;height:275px"></div>
<div class="a ctitle" style="left:405px;top:624px">Biometrics</div>
<div class="a" style="left:405px;top:646px;width:32px;height:6px;background:#007d79"></div>
<div class="a" style="left:1446px;top:621px;width:64px;height:32px;border:1px solid #a6c8ff;border-radius:4px;background:#fff"></div>
<div class="a" style="left:1446px;top:621px;width:32px;height:32px;border:1px solid #0f62fe;border-radius:4px 0 0 4px;background:#edf5ff"></div>
<svg class="a" style="left:1454px;top:629px" width="16" height="16" viewBox="0 0 16 16" fill="none" stroke="#0f62fe" stroke-width="1.1"><rect x="2.5" y="1.5" width="11" height="13" rx="1.5"/><path d="M2.5 4.5h11M2.5 7h11M2.5 9.5h11M2.5 12h11"/></svg>
<svg class="a" style="left:1486px;top:629px" width="16" height="16" viewBox="0 0 16 16" fill="none" stroke="#161616" stroke-width="1.1"><path d="M1.5 1.5V14.5H14.5"/><path d="M3.5 10.5L7 7L9.5 9L13.5 4.5M10.8 4.5H13.5V7.2"/></svg>
<div class="a" style="left:1528px;top:629px;width:1.4px;height:15px;background:#393939"></div>
<div class="a link" style="left:1559.0px;top:629px;font-size:14px;letter-spacing:0.25px">Add</div>
<svg class="a" style="left:1593px;top:629px" width="16" height="16" viewBox="0 0 16 16" fill="none" stroke="#0f62fe" stroke-width="1.15"><path d="M8 4v8M4 8h8"/></svg>
<div class="a" style="left:389px;top:661px;width:1236px;height:32px;background:#e0e0e0"></div>
<div class="a th" style="left:405.2px;top:660px;letter-spacing:-0.1px">Date and time</div>
<div class="a th" style="left:760.2px;top:660px;letter-spacing:-0.12px">Weight (kg)</div>
<div class="a th" style="left:964.4px;top:660px;letter-spacing:-0.08px">Height (cm)</div>
<div class="a th" style="left:1171.2px;top:660px;letter-spacing:0.058px">BMI (kg / m²)</div>
<div class="a th" style="left:1392.2px;top:660px;letter-spacing:-0.411px">MUAC (cm)</div>
<div class="a" style="left:389px;top:693px;width:1236px;height:32px;background:#fff;border-top:1px solid #e0e0e0"></div>
<div class="a td" style="left:405.0px;top:692px;letter-spacing:1.5px">11</div>
<div class="a td" style="left:439.2px;top:692px;letter-spacing:0.3px">Mar</div>
<div class="a td" style="left:482.2px;top:692px;letter-spacing:0.925px">2026,</div>
<div class="a td" style="left:524.8px;top:692px;letter-spacing:0.375px">02:14</div>
<div class="a td" style="left:566.2px;top:692px;letter-spacing:0.2px">AM</div>
<div class="a" style="left:426px;top:710px;width:10.0px;height:1px;background:#5a5a5a"></div>
<div class="a" style="left:468px;top:710px;width:10.7px;height:1px;background:#5a5a5a"></div>
<div class="a td" style="left:759.4px;top:692px">68</div>
<div class="a td" style="left:964.4px;top:692px">168</div>
<div class="a td" style="left:1171.4px;top:692px">24.1</div>
<div class="a td" style="left:1392.4px;top:692px">--</div>
<div class="a" style="left:389px;top:725px;width:1236px;height:32px;background:#f4f4f4;border-top:1px solid #e0e0e0"></div>
<div class="a td" style="left:405.0px;top:724px;letter-spacing:0.5px">29</div>
<div class="a td" style="left:440.0px;top:724px;letter-spacing:-0.5px">Dec</div>
<div class="a td" style="left:482.2px;top:724px;letter-spacing:0.925px">2025,</div>
<div class="a td" style="left:524.8px;top:724px;letter-spacing:0.375px">09:12</div>
<div class="a td" style="left:566.2px;top:724px;letter-spacing:-0.1px">PM</div>
<div class="a" style="left:426px;top:742px;width:10.0px;height:1px;background:#5a5a5a"></div>
<div class="a" style="left:468.7px;top:742px;width:10.0px;height:1px;background:#5a5a5a"></div>
<div class="a td" style="left:759.4px;top:724px">49</div>
<div class="a td" style="left:964.4px;top:724px">186</div>
<div class="a td" style="left:1171.4px;top:724px">14.2</div>
<div class="a td" style="left:1392.4px;top:724px">--</div>
<div class="a" style="left:389px;top:757px;width:1236px;height:32px;background:#fff;border-top:1px solid #e0e0e0"></div>
<div class="a td" style="left:405.0px;top:756px;letter-spacing:1.4px">13</div>
<div class="a td" style="left:440.0px;top:756px;letter-spacing:0.033px">Sept</div>
<div class="a td" style="left:487.0px;top:756px;letter-spacing:0.925px">2025,</div>
<div class="a td" style="left:529.2px;top:756px;letter-spacing:0.7px">07:20</div>
<div class="a td" style="left:570.2px;top:756px;letter-spacing:-0.1px">PM</div>
<div class="a" style="left:425.8px;top:774px;width:10.2px;height:1px;background:#5a5a5a"></div>
<div class="a" style="left:473.1px;top:774px;width:10.4px;height:1px;background:#5a5a5a"></div>
<div class="a td" style="left:759.4px;top:756px">72</div>
<div class="a td" style="left:964.4px;top:756px">186</div>
<div class="a td" style="left:1171.4px;top:756px">20.8</div>
<div class="a td" style="left:1392.4px;top:756px">--</div>
<div class="a" style="left:389px;top:789px;width:1236px;height:32px;background:#f4f4f4;border-top:1px solid #e0e0e0"></div>
<div class="a td" style="left:405.0px;top:788px;letter-spacing:1.4px">28</div>
<div class="a td" style="left:440.0px;top:788px;letter-spacing:0.033px">Sept</div>
<div class="a td" style="left:487.0px;top:788px;letter-spacing:0.925px">2024,</div>
<div class="a td" style="left:529.2px;top:788px;letter-spacing:0.7px">08:40</div>
<div class="a td" style="left:571.2px;top:788px;letter-spacing:-0.1px">AM</div>
<div class="a" style="left:425.8px;top:806px;width:10.2px;height:1px;background:#5a5a5a"></div>
<div class="a" style="left:473.1px;top:806px;width:10.4px;height:1px;background:#5a5a5a"></div>
<div class="a td" style="left:759.4px;top:788px">50</div>
<div class="a td" style="left:964.4px;top:788px">185</div>
<div class="a td" style="left:1171.4px;top:788px">14.6</div>
<div class="a td" style="left:1392.4px;top:788px">--</div>
<div class="a" style="left:389px;top:821px;width:1236px;height:32px;background:#fff;border-top:1px solid #e0e0e0"></div>
<div class="a td" style="left:405.0px;top:820px;letter-spacing:0.5px">02</div>
<div class="a td" style="left:440.2px;top:820px;letter-spacing:0.85px">Jul</div>
<div class="a td" style="left:477.4px;top:820px;letter-spacing:0.825px">2024,</div>
<div class="a td" style="left:519.8px;top:820px;letter-spacing:0.575px">04:55</div>
<div class="a td" style="left:561.2px;top:820px;letter-spacing:0.2px">AM</div>
<div class="a" style="left:426px;top:838px;width:10.0px;height:1px;background:#5a5a5a"></div>
<div class="a" style="left:463.7px;top:838px;width:9.7px;height:1px;background:#5a5a5a"></div>
<div class="a td" style="left:759.4px;top:820px">50</div>
<div class="a td" style="left:964.4px;top:820px">196</div>
<div class="a td" style="left:1171.4px;top:820px">13</div>
<div class="a td" style="left:1392.4px;top:820px">--</div>
<div class="a" style="left:389px;top:853px;width:1236px;height:1px;background:#e0e0e0"></div>
<div class="a ftxt" style="left:405.2px;top:863px;letter-spacing:0.39px">5 / 5 items</div>
<div class="a ftxt link" style="left:481.8px;top:863px;letter-spacing:0.167px">See all</div>
<div class="a" style="left:1423px;top:853px;width:1px;height:33px;background:#e0e0e0"></div>
<div class="a" style="left:1561px;top:853px;width:1px;height:33px;background:#e0e0e0"></div>
<div class="a" style="left:1593px;top:853px;width:1px;height:33px;background:#e0e0e0"></div>
<div class="a ftxt" style="left:1440.0px;top:863px;color:#161616">1</div>
<svg class="a" style="left:1453px;top:863px" width="16" height="16" viewBox="0 0 16 16" fill="none" stroke="#161616" stroke-width="1.1"><path d="M3.5 6l4.5 4.5 4.5-4.5"/></svg>
<div class="a ftxt" style="left:1485.0px;top:863px;color:#161616;letter-spacing:0.225px">of 1 page</div>
<svg class="a" style="left:1572px;top:863px" width="11" height="16" viewBox="0 0 11 16"><path d="M8 3.5L3 8L8 12.5Z" fill="#c6c6c6"/></svg>
<svg class="a" style="left:1604px;top:863px" width="11" height="16" viewBox="0 0 11 16"><path d="M4 3.5L9 8L4 12.5Z" fill="#a8a8a8"/></svg>
<div class="card" style="left:388px;top:908px;width:609px;height:20px"></div>
<div class="a" style="left:887px;top:903px;width:32px;height:5px;background:#fff;border-radius:3px 3px 0 0"></div>
<div class="card" style="left:1018px;top:908px;width:608px;height:20px"></div>
<!-- /TABLES -->
<div id="rside"></div>
<svg class="a" style="left:1771px;top:65px" width="20" height="20" viewBox="0 0 20 20" fill="none" stroke="#161616" stroke-width="1.2"><path d="M1.2 1.5H3.4L5.2 14.2H17"/><path d="M3.8 4.5H19L17.4 11H4.6"/><circle cx="6.5" cy="17.8" r="1" fill="#161616" stroke="none"/><circle cx="15.5" cy="17.8" r="1" fill="#161616" stroke="none"/></svg>
<svg class="a" style="left:1772px;top:113px" width="20" height="20" viewBox="0 0 20 20" fill="none" stroke="#161616" stroke-width="1.2"><path d="M2.5 16.2L3.8 13.2L13.6 3.4C14.4 2.6 15.6 2.6 16.4 3.4C17.2 4.2 17.2 5.4 16.4 6.2L6.6 16L3.6 17.4Z"/><path d="M12.4 4.6L15.2 7.4M16.3 2.2L18.4 0.8"/></svg>
<svg class="a" style="left:1772px;top:161px" width="20" height="20" viewBox="0 0 20 20" fill="none" stroke="#161616" stroke-width="1.2"><path d="M4.6 1.6H11.6L16 6V18.4H4.6Z"/><path d="M11.4 1.8V6.2H15.8"/><path d="M7 11.2H13.6M7 14.6H13.6" stroke-width="1.4"/></svg>
<svg class="a" style="left:1771px;top:209px" width="22" height="20" viewBox="0 0 22 20" fill="none" stroke="#161616" stroke-width="1.2"><circle cx="5.2" cy="3.6" r="2.2"/><circle cx="15.8" cy="3.6" r="2.2"/><circle cx="10.5" cy="9.6" r="2.2"/><path d="M1.6 12.6C1.6 9.6 2.8 8.2 5.2 8.2C6.2 8.2 7 8.5 7.6 9M19.4 12.6C19.4 9.6 18.2 8.2 15.8 8.2C14.8 8.2 14 8.5 13.4 9M6.6 18.8V17.4C6.6 15.4 8 14.2 10.5 14.2C13 14.2 14.4 15.4 14.4 17.4V18.8"/></svg>
<div class="a" style="left:1757px;top:871px;width:40px;height:40px;background:#fff;border-radius:4px;box-shadow:0 1px 3px rgba(0,0,0,0.12)"></div>
<svg class="a" style="left:1767px;top:881px" width="20" height="20" viewBox="0 0 20 20" fill="none" stroke="#161616" stroke-width="1.2"><circle cx="10" cy="10" r="8.3"/><path d="M7.6 7.6C7.6 6.2 8.6 5.2 10 5.2C11.4 5.2 12.4 6.2 12.4 7.4C12.4 8.8 10.6 9.2 10.1 10.6V11.6"/><circle cx="10" cy="14.2" r="0.8" fill="#161616" stroke="none"/></svg>
<div id="scroll"></div><div id="thumb"></div>
</body></html>
